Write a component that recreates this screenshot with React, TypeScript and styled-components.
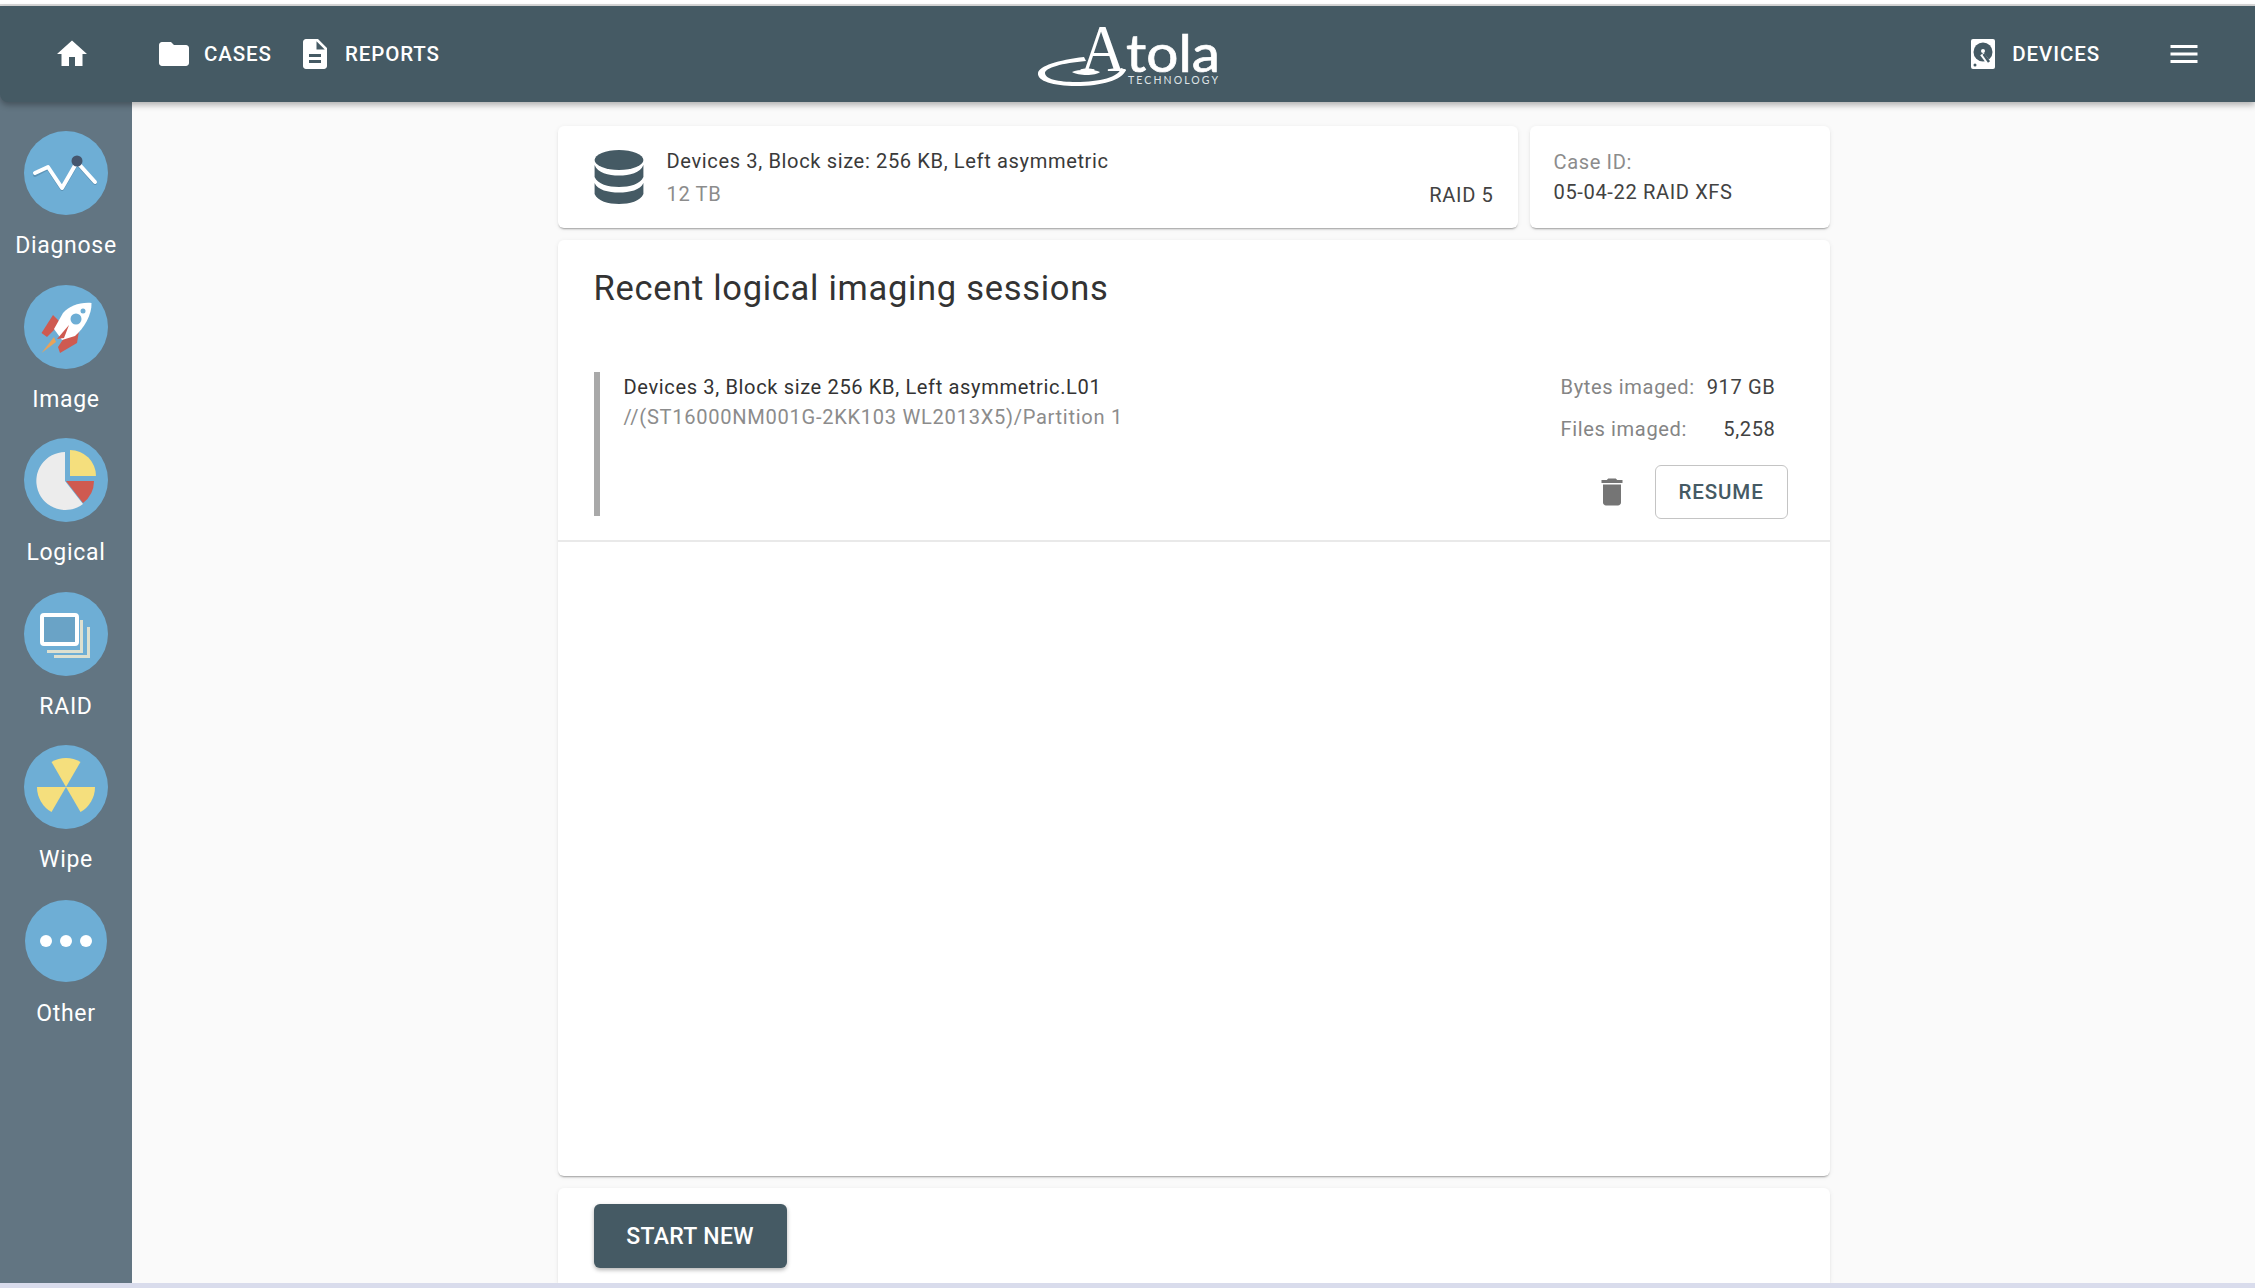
import React from 'react';
import styled, { createGlobalStyle } from 'styled-components';

const GlobalStyle = createGlobalStyle`
  html, body {
    margin: 0;
    padding: 0;
    height: 100%;
    background: #fafafa;
    font-family: Roboto, "Liberation Sans", sans-serif;
    overflow: hidden;
  }
`;

const Page = styled.div`
  height: 1288px;
  display: flex;
  flex-direction: column;
  background: #fafafa;
`;

const TopStrip = styled.div`
  height: 6px;
  flex: none;
  background: linear-gradient(#ffffff 0 4px, #d9d9d9 4px);
`;

const BottomStrip = styled.div`
  height: 5px;
  flex: none;
  background: #d9dcec;
`;

const Header = styled.header`
  height: 96px;
  flex: none;
  display: grid;
  grid-template-columns: 1fr auto 1fr;
  align-items: center;
  background: #455a64;
  box-shadow: 0 3px 6px rgba(0, 0, 0, 0.3);
  border-bottom-left-radius: 8px;
  position: relative;
  z-index: 2;
`;

const HeaderLeft = styled.div`
  display: flex;
  align-items: center;
  padding-left: 54px;
`;

const HeaderRight = styled.div`
  display: flex;
  align-items: center;
  justify-content: flex-end;
  padding-right: 53px;
`;

const HomeLink = styled.div`
  display: flex;
  margin-right: 66px;
`;

const NavLink = styled.div<{ $gap?: number }>`
  display: flex;
  align-items: center;
  gap: ${(p) => p.$gap ?? 12}px;
  margin-right: 25px;
  color: #fff;
  font-size: 20.5px;
  letter-spacing: 0.9px;
  font-weight: 500;
  line-height: 36px;
`;

const DevicesLink = styled(NavLink)`
  margin-right: 66px;
`;

const WhiteIcon = styled.svg`
  width: 36px;
  height: 36px;
  fill: #fff;
  display: block;
`;

const Logo = styled.svg`
  width: 184px;
  height: 96px;
  display: block;
`;

const Body = styled.div`
  flex: 1;
  min-height: 0;
  display: flex;
`;

const Sidebar = styled.nav`
  width: 132px;
  flex: none;
  background: #627582;
  margin-top: -10px;
  padding-top: 39px;
  box-sizing: border-box;
  display: flex;
  flex-direction: column;
  align-items: center;
`;

const SideItem = styled.div`
  height: 153.5px;
  display: flex;
  flex-direction: column;
  align-items: center;
  color: #fff;
  font-size: 23px;
  letter-spacing: 0.7px;
  line-height: 30px;
`;

const SideIcon = styled.svg`
  width: 84px;
  height: 84px;
  display: block;
  margin-bottom: 16px;
`;

const Main = styled.main`
  flex: 1;
  min-width: 0;
  display: flex;
  justify-content: center;
`;

const Column = styled.div`
  width: 1272px;
  display: flex;
  flex-direction: column;
  gap: 12px;
  padding-top: 24px;
  box-sizing: border-box;
`;

const TopRow = styled.div`
  display: flex;
  gap: 12px;
  height: 102px;
  flex: none;
`;

const Card = styled.section`
  background: #fff;
  border-radius: 6px;
  box-shadow: 0 2px 2px -1px rgba(0, 0, 0, 0.35), 0 1px 5px rgba(0, 0, 0, 0.07);
`;

const DeviceCard = styled(Card)`
  flex: 1;
  display: flex;
  align-items: center;
  padding: 0 24px 0 36px;
  position: relative;
`;

const DeviceInfo = styled.div`
  flex: 1;
  margin-left: 23px;
`;

const BodyText = styled.div`
  font-size: 20.1px;
  letter-spacing: 0.62px;
  line-height: 30px;
`;

const DeviceName = styled(BodyText)`
  color: #3a3a3a;
  margin-bottom: 3px;
`;

const DeviceSize = styled(BodyText)`
  color: #8c8c8c;
`;

const RaidLabel = styled(BodyText)`
  align-self: flex-end;
  margin-bottom: 18px;
  color: #424242;
`;

const CaseCard = styled(Card)`
  width: 300px;
  flex: none;
  padding: 21px 24px 0;
  box-sizing: border-box;
`;

const CaseLabel = styled(BodyText)`
  color: #8c8c8c;
`;

const CaseValue = styled(BodyText)`
  color: #424242;
`;

const SessionsCard = styled(Card)`
  flex: 1;
  min-height: 0;
`;

const Title = styled.h1`
  margin: 0;
  padding: 27px 36px 0;
  font-size: 34.5px;
  letter-spacing: 0.7px;
  line-height: 42px;
  font-weight: 400;
  color: #333;
`;

const SessionRow = styled.div`
  margin-top: 63px;
  padding: 0 42px 21px 36px;
  border-bottom: 2px solid #e9e9e9;
  display: flex;
`;

const SessionBody = styled.div`
  flex: 1;
  border-left: 6px solid #a9a9a9;
  padding-left: 24px;
  height: 144px;
  box-sizing: border-box;
`;

const SessionName = styled(BodyText)`
  color: #333;
`;

const SessionPath = styled(BodyText)`
  color: #8c8c8c;
  letter-spacing: 0.71px;
`;

const SessionSide = styled.div`
  width: 227px;
  flex: none;
  display: flex;
  flex-direction: column;
`;

const Stat = styled(BodyText)`
  width: 215px;
  height: 42px;
  display: flex;
  justify-content: space-between;
  color: #424242;
`;

const StatLabel = styled.span`
  color: #858585;
`;

const Actions = styled.div`
  display: flex;
  align-items: center;
  justify-content: flex-end;
  gap: 25px;
  margin-top: 9px;
`;

const TrashIcon = styled.svg`
  width: 36px;
  height: 36px;
  fill: #757575;
  display: block;
`;

const OutlineButton = styled.button`
  width: 133px;
  height: 54px;
  flex: none;
  padding: 0;
  background: #fff;
  border: 1.5px solid #c4c4c4;
  border-radius: 6px;
  color: #455a64;
  font-family: inherit;
  font-size: 20.5px;
  letter-spacing: 0.9px;
  font-weight: 500;
`;

const FooterCard = styled(Card)`
  height: 95px;
  flex: none;
  padding: 16px 36px 0;
  box-sizing: border-box;
  border-radius: 6px 6px 0 0;
`;

const PrimaryButton = styled.button`
  width: 193px;
  height: 64px;
  padding: 0;
  border: none;
  border-radius: 6px;
  background: #455a64;
  color: #fff;
  font-family: inherit;
  font-size: 23px;
  letter-spacing: 0.35px;
  font-weight: 500;
  box-shadow: 0 2px 4px rgba(0, 0, 0, 0.3);
`;

const App = () => {
  return (
    <Page>
      <GlobalStyle />
      <TopStrip />
      <Header>
        <HeaderLeft>
          <HomeLink>
            <WhiteIcon viewBox="0 0 24 24"><path d="M10 20v-6h4v6h5v-8h3L12 3 2 12h3v8z" /></WhiteIcon>
          </HomeLink>
          <NavLink>
            <WhiteIcon viewBox="0 0 24 24"><path d="M10 4H4c-1.1 0-1.99.9-1.99 2L2 18c0 1.1.9 2 2 2h16c1.1 0 2-.9 2-2V8c0-1.1-.9-2-2-2h-8l-2-2z" /></WhiteIcon>
            CASES
          </NavLink>
          <NavLink>
            <WhiteIcon viewBox="0 0 24 24"><path d="M14 2H6c-1.1 0-1.99.9-1.99 2L4 20c0 1.1.89 2 1.99 2H18c1.1 0 2-.9 2-2V8l-6-6zm2 16H8v-2h8v2zm0-4H8v-2h8v2zm-3-5V3.5L18.5 9H13z" /></WhiteIcon>
            REPORTS
          </NavLink>
        </HeaderLeft>
        <Logo viewBox="0 0 184 96">
          <path
            d="M48 51 C22 54 3 60 2 67 C1 75 17 80 40 80 C66 80 86 74 90 64 L85 62 C83 71 64 76 40 76 C22 76 9 73 9 67 C9 62 26 57 50 55 Z"
            fill="#fff"
          />
          <path d="M36 66 C42 63 58 63 64 66 C60 70 42 70 36 66 Z" fill="#fff" />
          <text x="44" y="65" fontFamily="'Liberation Serif', serif" fontSize="68" fill="#fff" textLength="46" lengthAdjust="spacingAndGlyphs">A</text>
          <text x="90" y="66" fontFamily="Lato, 'Open Sans', sans-serif" fontSize="53" fill="#fff" stroke="#fff" strokeWidth="0.7" textLength="94" lengthAdjust="spacingAndGlyphs">tola</text>
          <text x="92" y="78" fontFamily="Lato, 'Open Sans', sans-serif" fontSize="10.5" fill="#dfe4e7" textLength="90">TECHNOLOGY</text>
        </Logo>
        <HeaderRight>
          <DevicesLink $gap={17}>
            <svg width="24" height="30" viewBox="0 0 24 30">
              <rect width="24" height="30" rx="2" fill="#fff" />
              <circle cx="12" cy="13" r="9.5" fill="#455a64" />
              <circle cx="12" cy="12" r="2" fill="#fff" />
              <path d="M11 15 L17 23" stroke="#fff" strokeWidth="4.5" />
              <path d="M12.5 15 L18 23" stroke="#455a64" strokeWidth="2.5" />
              <circle cx="4" cy="26" r="1.5" fill="#455a64" />
            </svg>
            DEVICES
          </DevicesLink>
          <WhiteIcon viewBox="0 0 24 24"><path d="M3 18h18v-2H3v2zm0-5h18v-2H3v2zm0-7v2h18V6H3z" /></WhiteIcon>
        </HeaderRight>
      </Header>
      <Body>
        <Sidebar>
          <SideItem>
            <SideIcon viewBox="0 0 84 84">
              <circle cx="42" cy="42" r="42" fill="#6eaed5" />
              <path d="M11 43 L24 36 L38 57 L53 31 L71 51" fill="none" stroke="#5b93b6" strokeWidth="4" strokeLinecap="round" strokeLinejoin="round" transform="translate(0 1)" />
              <path d="M11 42 L24 36 L38 57 L53 31 L71 51" fill="none" stroke="#fff" strokeWidth="4" strokeLinecap="round" strokeLinejoin="round" />
              <circle cx="53" cy="30" r="5.5" fill="#45566e" />
            </SideIcon>
            Diagnose
          </SideItem>
          <SideItem>
            <SideIcon viewBox="0 0 84 84">
              <circle cx="42" cy="42" r="42" fill="#6eaed5" />
              <path d="M29 30 L17.500 48 L23 52 L37 38 Z" fill="#cf5a50" />
              <path d="M55 46 L53 58 L36 68 L34 62 L42 50 Z" fill="#cf5a50" />
              <path d="M30 52 L17.500 68 L32 57 Z" fill="#e8a35a" />
              <path d="M67.500 18 C56 17 45 21 39 28 L30 44 L38 55 L51 51 C60 43 68 30 67.500 18 Z" fill="#fff" />
              <path d="M45 40 L33 54 L40 53 Z" fill="#cf5a50" />
              <circle cx="52" cy="34" r="5.500" fill="#6eaed5" />
              <circle cx="59" cy="26" r="2.500" fill="#6eaed5" />
            </SideIcon>
            Image
          </SideItem>
          <SideItem>
            <SideIcon viewBox="0 0 84 84">
              <circle cx="42" cy="42" r="42" fill="#6eaed5" />
              <path d="M41 14 A29 29 0 1 0 59 66 L41 43 Z" fill="#ececec" />
              <path d="M46 12 A26 26 0 0 1 72 38 H46 Z" fill="#f5df7d" />
              <path d="M42 43 H70 A28 28 0 0 1 59 65 Z" fill="#cf5a50" />
            </SideIcon>
            Logical
          </SideItem>
          <SideItem>
            <SideIcon viewBox="0 0 84 84">
              <circle cx="42" cy="42" r="42" fill="#6eaed5" />
              <path d="M23 58 H56 V28 H59 V61 H23 Z" fill="#dde0d0" />
              <path d="M30 63 H63 V35 H66 V66 H30 Z" fill="#dde0d0" />
              <rect x="18" y="23" width="35" height="29" rx="2" fill="#6aa3c6" stroke="#fff" strokeWidth="4" />
            </SideIcon>
            RAID
          </SideItem>
          <SideItem>
            <SideIcon viewBox="0 0 84 84">
              <circle cx="42" cy="42" r="42" fill="#6eaed5" />
              <g fill="#f5df7d">
                <path d="M42 42 L27.500 16.900 A29 29 0 0 1 56.500 16.900 Z" />
                <path d="M42 42 L13 42 A29 29 0 0 0 27.500 67.100 Z" />
                <path d="M42 42 L71 42 A29 29 0 0 1 56.500 67.100 Z" />
              </g>
            </SideIcon>
            Wipe
          </SideItem>
          <SideItem>
            <SideIcon viewBox="0 0 84 84">
              <circle cx="42" cy="42" r="41" fill="#6eaed5" />
              <g fill="#fff">
                <circle cx="22" cy="42" r="6" />
                <circle cx="42" cy="42" r="6" />
                <circle cx="62" cy="42" r="6" />
              </g>
            </SideIcon>
            Other
          </SideItem>
        </Sidebar>
        <Main>
          <Column>
            <TopRow>
              <DeviceCard>
                <svg width="50" height="54" viewBox="0 0 42 54" preserveAspectRatio="none" fill="#455a64">
                  <ellipse cx="21" cy="10" rx="20.500" ry="10" />
                  <path d="M0.500 15 C3 23 12 25.500 21 25.500 C30 25.500 39 23 41.500 15 V27 C39 34 30 37 21 37 C12 37 3 34 0.500 27 Z" />
                  <path d="M0.500 33 C3 40 12 42.500 21 42.500 C30 42.500 39 40 41.500 33 V44 C39 51 30 54 21 54 C12 54 3 51 0.500 44 Z" />
                </svg>
                <DeviceInfo>
                  <DeviceName>Devices 3, Block size: 256 KB, Left asymmetric</DeviceName>
                  <DeviceSize>12 TB</DeviceSize>
                </DeviceInfo>
                <RaidLabel>RAID 5</RaidLabel>
              </DeviceCard>
              <CaseCard>
                <CaseLabel>Case ID:</CaseLabel>
                <CaseValue>05-04-22 RAID XFS</CaseValue>
              </CaseCard>
            </TopRow>
            <SessionsCard>
              <Title>Recent logical imaging sessions</Title>
              <SessionRow>
                <SessionBody>
                  <SessionName>Devices 3, Block size 256 KB, Left asymmetric.L01</SessionName>
                  <SessionPath>//(ST16000NM001G-2KK103 WL2013X5)/Partition 1</SessionPath>
                </SessionBody>
                <SessionSide>
                  <Stat><StatLabel>Bytes imaged:</StatLabel>917 GB</Stat>
                  <Stat><StatLabel>Files imaged:</StatLabel>5,258</Stat>
                  <Actions>
                    <TrashIcon viewBox="0 0 24 24"><path d="M6 19c0 1.1.9 2 2 2h8c1.1 0 2-.9 2-2V7H6v12zM19 4h-3.5l-1-1h-5l-1 1H5v2h14V4z" /></TrashIcon>
                    <OutlineButton>RESUME</OutlineButton>
                  </Actions>
                </SessionSide>
              </SessionRow>
            </SessionsCard>
            <FooterCard>
              <PrimaryButton>START NEW</PrimaryButton>
            </FooterCard>
          </Column>
        </Main>
      </Body>
      <BottomStrip />
    </Page>
  );
};

export default App;
